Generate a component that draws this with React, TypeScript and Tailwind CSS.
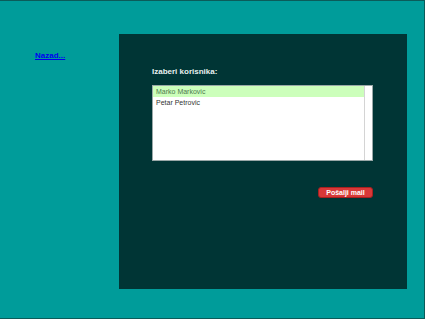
import React, { useState } from 'react';

const users = ['Marko Markovic', 'Petar Petrovic'];

export default function App() {
  const [selected, setSelected] = useState(0);

  return (
    <div
      className="flex h-[319px] w-full border-t border-r border-b border-[#0b5c5a] bg-[#009c9a]"
      style={{ fontFamily: '"Liberation Sans", Arial, sans-serif' }}
    >
      <div className="w-[119px] shrink-0 pl-[35px] pt-[50px] text-[8px] leading-[10px]">
        <a href="#" className="font-bold text-[#0000ee] underline">
          Nazad...
        </a>
      </div>

      <div className="mt-[33px] h-[255px] w-[288px] shrink-0 bg-[#003535] pl-[33px] pt-[33px]">
        <div className="mb-[8px] text-[8px] font-bold leading-[10px] text-[#e8f0f0]">Izaberi korisnika:</div>

        <div className="flex h-[76px] w-[221px] border border-[#9aa8a8] bg-white">
          <div className="flex-1">
            {users.map((u, i) => (
              <div
                key={u}
                onClick={() => setSelected(i)}
                className={`h-[11px] pl-[3px] text-[7px] leading-[11px] ${
                  selected === i ? 'bg-[#ccffbb] text-[#4f7a4f]' : 'text-[#333]'
                }`}
              >
                {u}
              </div>
            ))}
          </div>
          <div className="w-[8px] border-l border-[#d4d4d4] bg-white" />
        </div>

        <div className="mt-[26px] flex w-[221px] justify-end">
          <button className="h-[11px] w-[55px] rounded-[3px] border border-[#a82020] bg-[#d83838] text-[7px] font-bold leading-[9px] text-white">
            Pošalji mail
          </button>
        </div>
      </div>
    </div>
  );
}
